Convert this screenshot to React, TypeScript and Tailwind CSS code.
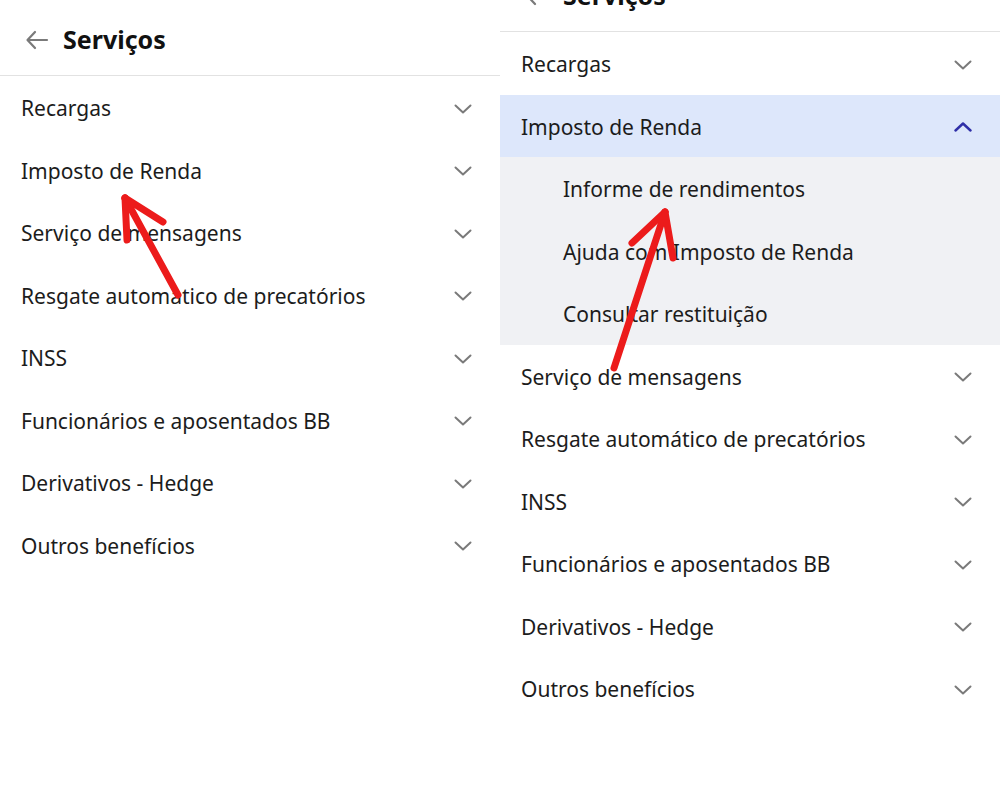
import React from "react";

const font = { fontFamily: '"Noto Sans", "Open Sans", sans-serif' };

function ChevronDown({ className = "" }: { className?: string }) {
  return (
    <svg width="18" height="10" viewBox="0 0 18 10" className={className} fill="none">
      <path d="M1.5 1.5 L9 8.5 L16.5 1.5" stroke="currentColor" strokeWidth="2" strokeLinecap="round" strokeLinejoin="round" />
    </svg>
  );
}

function ChevronUp({ className = "" }: { className?: string }) {
  return (
    <svg width="18" height="10" viewBox="0 0 18 10" className={className} fill="none">
      <path d="M1.5 8.5 L9 1.5 L16.5 8.5" stroke="currentColor" strokeWidth="2.4" strokeLinecap="round" strokeLinejoin="round" />
    </svg>
  );
}

function Row({ label }: { label: string }) {
  return (
    <div className="flex h-[62.5px] items-center justify-between pl-[21px] pr-[28px] pt-[3px]">
      <span className="text-[21px] text-[#1c1c1c]">{label}</span>
      <ChevronDown className="text-[#7a7a7a]" />
    </div>
  );
}

function Header() {
  return (
    <div className="flex h-[76px] items-center gap-[14px] border-b border-[#e2e2e2] pl-[25px] pt-[4px]">
      <svg width="24" height="20" viewBox="0 0 24 20" fill="none">
        <path d="M22 10 H3 M10 2 L2.5 10 L10 18" stroke="#7a7a7a" strokeWidth="2.2" strokeLinecap="round" strokeLinejoin="round" />
      </svg>
      <span className="text-[25px] font-bold text-[#111]">Serviços</span>
    </div>
  );
}

const after = [
  "Serviço de mensagens",
  "Resgate automático de precatórios",
  "INSS",
  "Funcionários e aposentados BB",
  "Derivativos - Hedge",
  "Outros benefícios",
];

export default function App() {
  return (
    <div className="relative flex h-[802px] w-[1000px] overflow-hidden bg-white" style={font}>
      {/* Left panel */}
      <div className="h-full w-[500px] overflow-hidden">
        <Header />
        <Row label="Recargas" />
        <Row label="Imposto de Renda" />
        <Row label="Serviço de mensagens" />
        <Row label="Resgate automatico de precatórios" />
        <Row label="INSS" />
        <Row label="Funcionários e aposentados BB" />
        <Row label="Derivativos - Hedge" />
        <Row label="Outros benefícios" />
      </div>

      {/* Right panel */}
      <div className="h-full w-[500px] overflow-hidden">
        <div className="-mt-[44px]">
          <Header />
          <Row label="Recargas" />
          <div className="flex h-[62.5px] items-center justify-between bg-[#dde7fb] pl-[21px] pr-[28px] pt-[3px]">
            <span className="text-[21px] text-[#1c1c1c]">Imposto de Renda</span>
            <ChevronUp className="text-[#2f2fa8]" />
          </div>
          <div className="bg-[#f0f1f4]">
            {["Informe de rendimentos", "Ajuda com Imposto de Renda", "Consultar restituição"].map((l) => (
              <div key={l} className="flex h-[62.5px] items-center pl-[63px] pt-[3px]">
                <span className="text-[21px] text-[#1c1c1c]">{l}</span>
              </div>
            ))}
          </div>
          {after.map((l) => (
            <Row key={l} label={l} />
          ))}
        </div>
      </div>

      {/* Red arrow annotations */}
      <svg className="pointer-events-none absolute left-0 top-0" width="1000" height="802" viewBox="0 0 1000 802" fill="none">
        <g stroke="#ec1b1b" strokeWidth="7" strokeLinecap="round" strokeLinejoin="round">
          <path d="M178 295 L125 198" />
          <path d="M125 198 L127 240" />
          <path d="M125 198 L163 222" />
          <path d="M614 368 L665 212" />
          <path d="M665 212 L632 243" />
          <path d="M665 212 L673 258" />
        </g>
      </svg>
    </div>
  );
}
